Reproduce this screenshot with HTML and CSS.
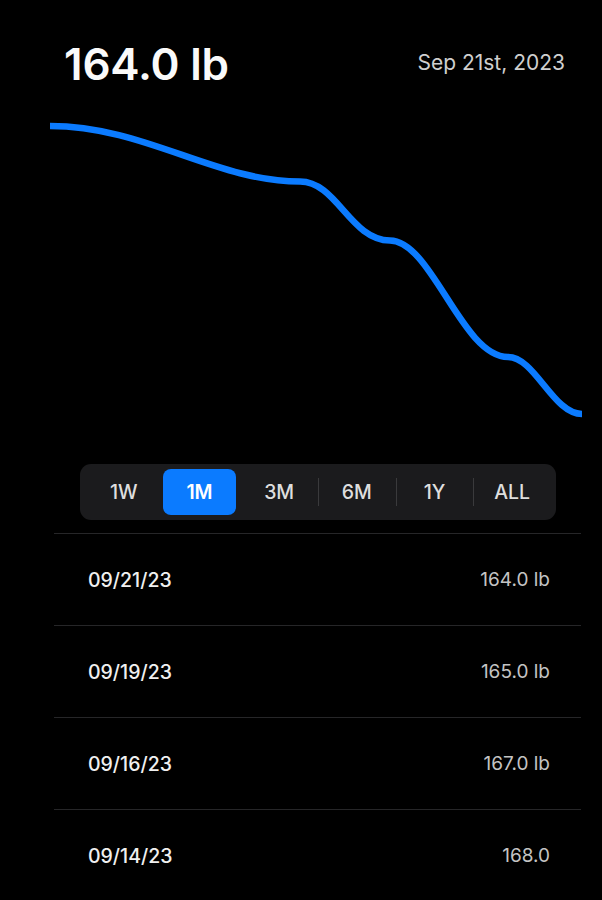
FILE: index.html
```html
<!DOCTYPE html>
<html>
<head>
<meta charset="utf-8">
<link rel="stylesheet" href="styles.css">
</head>
<body>
<div class="screen">
  <header class="header">
    <h1 class="weight">164.0 lb</h1>
    <div class="date">Sep 21st, 2023</div>
  </header>
  <svg class="chart" width="602" height="340" viewBox="0 0 602 340">
    <path d="M50,26 C145,26 215,81.5 300,81.5 C337,81.5 350,140 390,140.5 C432,141 462,257 508,257 C535,257 553,314 582,314" fill="none" stroke="#0b7bff" stroke-width="6.5" stroke-linecap="butt" stroke-linejoin="round"/>
  </svg>
  <div class="segmented">
    <div class="seg">1W</div>
    <div class="seg seg-active">1M</div>
    <div class="seg">3M</div>
    <div class="seg seg-div">6M</div>
    <div class="seg seg-div">1Y</div>
    <div class="seg seg-div">ALL</div>
  </div>
  <ul class="list">
    <li class="row"><span class="row-date">09/21/23</span><span class="row-val">164.0 lb</span></li>
    <li class="row"><span class="row-date">09/19/23</span><span class="row-val">165.0 lb</span></li>
    <li class="row"><span class="row-date">09/16/23</span><span class="row-val">167.0 lb</span></li>
    <li class="row"><span class="row-date">09/14/23</span><span class="row-val">168.0</span></li>
  </ul>
</div>
</body>
</html>
```
FILE: styles.css
```css
html, body {
  margin: 0;
  padding: 0;
  background: #000;
}
body {
  width: 602px;
  height: 900px;
  overflow: hidden;
  font-family: Inter, "Liberation Sans", sans-serif;
  color: #fff;
}
.screen {
  display: flex;
  flex-direction: column;
}
.header {
  display: flex;
  justify-content: space-between;
  align-items: flex-start;
  padding: 41px 37px 0 64px;
}
.weight {
  margin: 0;
  font-size: 44px;
  line-height: 46px;
  font-weight: 600;
  letter-spacing: -0.2px;
  color: #fafafa;
}
.date {
  margin-top: 10px;
  font-size: 21px;
  line-height: 24px;
  font-weight: 400;
  color: #cfcfcf;
}
.chart {
  display: block;
  margin-top: 13px;
}
.segmented {
  margin: 24px 0 0 80px;
  width: 476px;
  height: 56px;
  box-sizing: border-box;
  padding: 5px;
  background: #1b1b1d;
  border-radius: 11px;
  display: grid;
  grid-template-columns: repeat(6, 1fr);
}
.seg {
  display: flex;
  align-items: center;
  justify-content: center;
  font-size: 19.5px;
  font-weight: 500;
  color: #dedede;
  position: relative;
}
.seg-div::before {
  content: "";
  position: absolute;
  left: 0;
  top: 9px;
  bottom: 9px;
  width: 1px;
  background: #3a3a3c;
}
.seg-active {
  background: #0b7bff;
  color: #fff;
  font-weight: 600;
  border-radius: 8px;
  margin-right: 4px;
}
.list {
  list-style: none;
  margin: 13px 0 0 54px;
  padding: 0;
  width: 527px;
}
.row {
  height: 92px;
  box-sizing: border-box;
  border-top: 1px solid #262628;
  display: flex;
  justify-content: space-between;
  align-items: center;
  padding: 0 31px 0 34px;
}
.row-date {
  font-size: 19.5px;
  font-weight: 500;
  color: #f0f0f0;
}
.row-val {
  font-size: 19px;
  font-weight: 400;
  color: #c4c4c4;
}
```
